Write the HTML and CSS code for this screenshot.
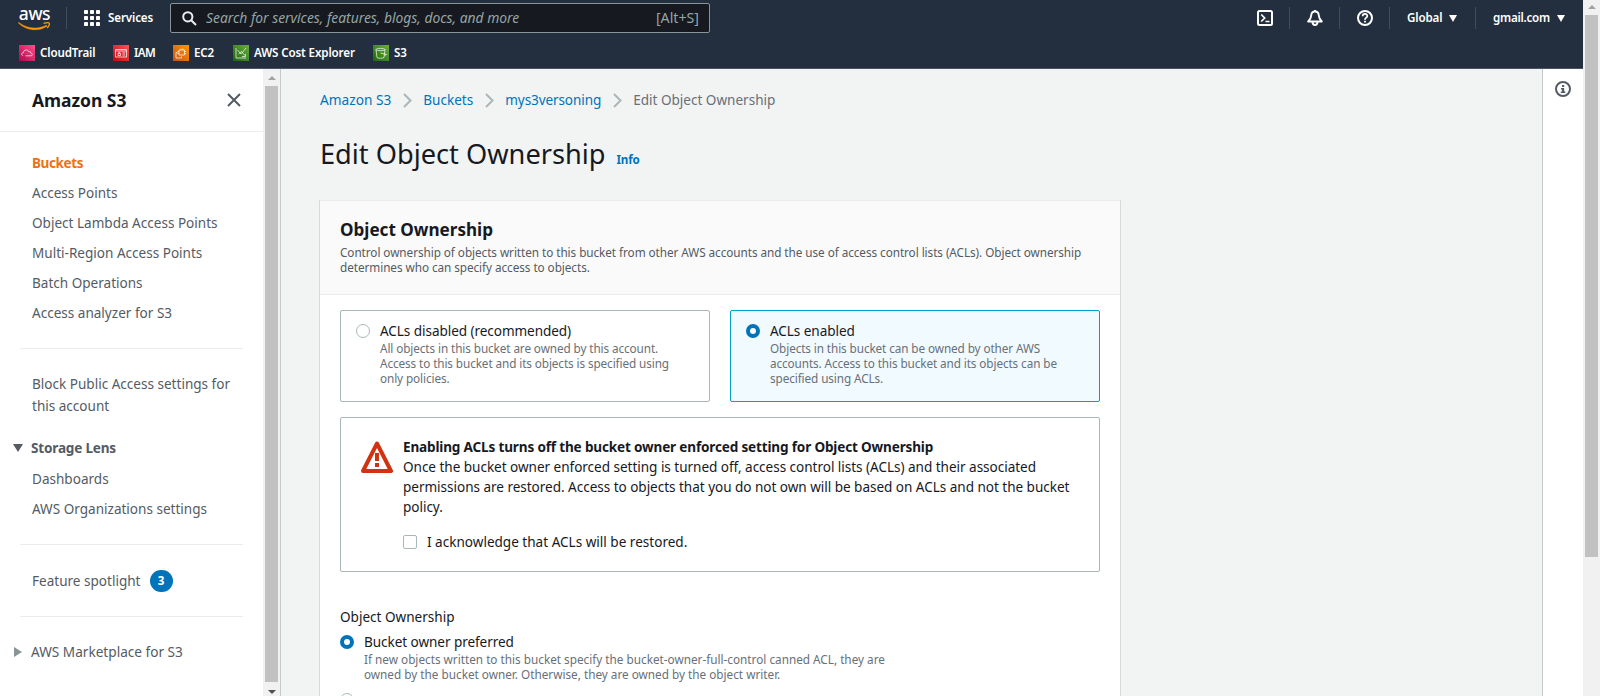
FILE: index.html
```html
<!DOCTYPE html>
<html lang="en">
<head>
<meta charset="utf-8">
<title>Edit Object Ownership</title>
<link rel="stylesheet" href="styles.css">
</head>
<body>
<div class="window">
  <div class="page">
    <header class="nav">
      <div class="nav-main">
        <div class="logo">
          <span class="logo-text">aws</span>
          <svg class="logo-smile" width="33" height="9" viewBox="0 0 33 9"><path d="M.3 1C8.500 8.800 20.500 9.800 29 4.200L28.500 3.200C20 7.600 9 7 .8.400Z" fill="#ff9900" stroke="#ff9900" stroke-width=".5"/><path d="M25.500 1.300C28.500.6 31 .6 31.300 1.200C31.600 2 30.600 4.500 29.200 6" fill="none" stroke="#ff9900" stroke-width="1.300"/></svg>
        </div>
        <i class="sep sep-logo"></i>
        <svg class="grid-icon" width="16" height="16" viewBox="0 0 16 16" fill="#fff"><rect width="4" height="4" rx=".8"/><rect x="6" width="4" height="4" rx=".8"/><rect x="12" width="4" height="4" rx=".8"/><rect y="6" width="4" height="4" rx=".8"/><rect x="6" y="6" width="4" height="4" rx=".8"/><rect x="12" y="6" width="4" height="4" rx=".8"/><rect y="12" width="4" height="4" rx=".8"/><rect x="6" y="12" width="4" height="4" rx=".8"/><rect x="12" y="12" width="4" height="4" rx=".8"/></svg>
        <span class="services">Services</span>
        <div class="search">
          <svg width="15" height="15" viewBox="0 0 15 15" fill="none" stroke="#eaeded" stroke-width="2"><circle cx="5.800" cy="5.800" r="4.600"/><path d="M9.200 9.200L14 14"/></svg>
          <span class="search-hint">Search for services, features, blogs, docs, and more</span>
          <span class="search-key">[Alt+S]</span>
        </div>
        <div class="nav-tools">
          <svg class="tool" width="16" height="16" viewBox="0 0 16 16" fill="none" stroke="#fff" stroke-width="2"><rect x="1" y="1" width="14" height="14" rx="1.500"/><path d="M4.200 4.500L7.700 8L4.200 11.500M8.500 11.500H12.500" stroke-width="1.700"/></svg>
          <i class="sep"></i>
          <svg class="tool" width="16" height="16" viewBox="0 0 16 16" fill="none" stroke="#fff" stroke-width="1.900" stroke-linejoin="round"><path d="M8 1.500C5.500 1.500 4.300 3.300 4.200 5.500C4.100 8 3.500 9 1.200 11.500H14.800C12.500 9 11.900 8 11.800 5.500C11.700 3.300 10.500 1.500 8 1.500Z"/><path d="M5.500 12C5.600 16 10.400 16 10.500 12M8 0V2"/></svg>
          <i class="sep"></i>
          <svg class="tool" width="16" height="16" viewBox="0 0 16 16" fill="none" stroke="#fff" stroke-width="2"><circle cx="8" cy="8" r="7"/><path d="M5.700 6.200C5.700 3.200 10.300 3.200 10.300 6C10.300 7.700 8 7.600 8 9.700M8 10.700V12.500" stroke-width="1.800"/></svg>
          <i class="sep"></i>
          <span class="menu menu-region">Global<svg width="8" height="7" viewBox="0 0 8 7" fill="#fff"><path d="M0 0H8L4 7Z"/></svg></span>
          <i class="sep"></i>
          <span class="menu menu-account">gmail.com<svg width="8" height="7" viewBox="0 0 8 7" fill="#fff"><path d="M0 0H8L4 7Z"/></svg></span>
        </div>
      </div>
      <nav class="favorites">
        <a class="fav fav-trail"><svg class="pink" viewBox="0 0 16 16"><path d="M4 10.500C2 10 2.500 7.500 4.500 7.600C4.500 4.500 9 4 9.800 6.800C11 6 12 7 11.600 8C14 8.500 13.500 10.800 12 10.800H6.500"/></svg>CloudTrail</a>
        <a class="fav fav-iam"><svg class="red" viewBox="0 0 16 16"><path d="M2.500 4.500H13.500V12H2.500ZM2.500 6H13.500M9.500 8H12M9.500 10H12M5 8.500H7.500V10.500H5ZM5.700 8.500V7.500H6.800V8.500"/></svg>IAM</a>
        <a class="fav fav-ec2"><svg class="orange" viewBox="0 0 16 16"><path d="M6 5H11.500V10H6ZM4.500 7.500H3V13H8.500V11.500M8 3.500V5M10 3.500V5M11.500 6.500H13M11.500 8.500H13M4.500 6.500H6M4.500 8.500H6"/></svg>EC2</a>
        <a class="fav fav-cost"><svg class="green" viewBox="0 0 16 16"><path d="M3 3V13H13M4.500 5L8 9L13 3M5.500 9L8.500 6.500L12 10.500M9 11.500H12.500V9"/></svg>AWS Cost Explorer</a>
        <a class="fav fav-s3"><svg class="green" viewBox="0 0 16 16"><path d="M3 4.500C3 3 12 3 12 4.500C12 6 3 6 3 4.500L4 12.500C5 13.500 10 13.500 11 12.500L12 4.500M7.500 8L13.500 9.500L11.700 10.500"/></svg>S3</a>
      </nav>
    </header>
    <div class="body">
      <aside class="side">
        <div class="side-head"><h2>Amazon S3</h2><svg width="14" height="14" viewBox="0 0 14 14" stroke="#545b64" stroke-width="2"><path d="M1 1L13 13M13 1L1 13"/></svg></div>
        <ul class="links links-main">
          <li class="current">Buckets</li><li>Access Points</li><li>Object Lambda Access Points</li><li>Multi-Region Access Points</li><li>Batch Operations</li><li>Access analyzer for S3</li>
        </ul>
        <hr>
        <p class="block-access">Block Public Access settings for<br>this account</p>
        <div class="group group-open"><svg width="10" height="8" viewBox="0 0 10 8" fill="#545b64"><path d="M0 0H10L5 8Z"/></svg>Storage Lens</div>
        <ul class="links links-lens"><li>Dashboards</li><li>AWS Organizations settings</li></ul>
        <hr>
        <div class="spotlight">Feature spotlight<span class="count">3</span></div>
        <hr>
        <div class="group group-closed"><svg width="8" height="10" viewBox="0 0 8 10" fill="#879596"><path d="M0 0V10L8 5Z"/></svg>AWS Marketplace for S3</div>
      </aside>
      <div class="bar side-bar"><i class="up"></i><i class="thumb"></i><i class="down"></i></div>
      <main class="content">
        <div class="crumbs">
          <a class="crumb-root">Amazon S3</a><svg viewBox="0 0 9 15"><path d="M1 1L7.500 7.500L1 14"/></svg><a>Buckets</a><svg viewBox="0 0 9 15"><path d="M1 1L7.500 7.500L1 14"/></svg><a class="crumb-name">mys3versoning</a><svg viewBox="0 0 9 15"><path d="M1 1L7.500 7.500L1 14"/></svg><span>Edit Object Ownership</span>
        </div>
        <div class="title"><h1>Edit Object Ownership</h1><a>Info</a></div>
        <section class="card">
          <div class="card-head">
            <h2>Object Ownership</h2>
            <p>Control ownership of objects written to this bucket from other AWS accounts and the use of access control lists (ACLs). Object ownership<br>determines who can specify access to objects.</p>
          </div>
          <div class="card-body">
            <div class="tiles">
              <div class="tile"><i class="radio"></i><div><div class="label">ACLs disabled (recommended)</div><p class="hint">All objects in this bucket are owned by this account.<br>Access to this bucket and its objects is specified using<br>only policies.</p></div></div>
              <div class="tile selected"><i class="radio on"></i><div><div class="label">ACLs enabled</div><p class="hint">Objects in this bucket can be owned by other AWS<br>accounts. Access to this bucket and its objects can be<br>specified using ACLs.</p></div></div>
            </div>
            <div class="warning">
              <svg width="32" height="32" viewBox="0 0 32 32"><path d="M16 2.500L30 30H2Z" fill="none" stroke="#d13212" stroke-width="4" stroke-linejoin="round"/><path d="M16 12V20M16 22V26" stroke="#d13212" stroke-width="4"/></svg>
              <div class="warning-text">
                <strong>Enabling ACLs turns off the bucket owner enforced setting for Object Ownership</strong>
                <p>Once the bucket owner enforced setting is turned off, access control lists (ACLs) and their associated<br>permissions are restored. Access to objects that you do not own will be based on ACLs and not the bucket<br>policy.</p>
                <div class="ack"><i class="check"></i>I acknowledge that ACLs will be restored.</div>
              </div>
            </div>
            <div class="field-label">Object Ownership</div>
            <div class="option"><i class="radio on"></i><div><div class="label">Bucket owner preferred</div><p class="hint">If new objects written to this bucket specify the bucket-owner-full-control canned ACL, they are<br>owned by the bucket owner. Otherwise, they are owned by the object writer.</p></div></div>
            <div class="option option-next"><i class="radio"></i></div>
          </div>
        </section>
      </main>
      <div class="info"><svg width="16" height="16" viewBox="0 0 16 16"><circle cx="8" cy="8" r="7" fill="none" stroke="#545b64" stroke-width="2"/><path d="M7 4H9.200V6H7ZM6 7H9.200V10.500H10.300V12H5.800V10.500H7V8.500H6Z" fill="#545b64"/></svg></div>
    </div>
  </div>
  <div class="bar page-bar"><i class="up"></i><i class="thumb"></i></div>
</div>
</body>
</html>
```
FILE: styles.css
```css
* { box-sizing: border-box; }
body {
  margin: 0;
  height: 696px;
  overflow: hidden;
  font: 13.55px/20px "Noto Sans", sans-serif;
  color: #16191f;
  white-space: nowrap;
}
h1, h2, p, ul { margin: 0; padding: 0; }
ul { list-style: none; }
svg, i { display: block; flex: none; }
hr { width: 223px; height: 1px; margin: 0 0 0 20px; border: 0; background: #eaeded; }
a { color: #0073bb; }

.window { display: flex; height: 696px; }
.page { flex: 1; display: flex; flex-direction: column; min-width: 0; }

/* Top navigation */
.nav {
  height: 69px;
  flex: none;
  background: #232f3e;
  border-bottom: 1px solid #4a545f;
  color: #fff;
  font-weight: 600;
  font-size: 11.6px;
  letter-spacing: -.13px;
}
.nav-main { display: flex; align-items: center; height: 36px; }
.logo { width: 33px; margin-left: 18px; display: flex; flex-direction: column; align-items: center; }
.logo-text { font: 500 17.5px/15px "Noto Sans", sans-serif; letter-spacing: -.4px; }
.logo-smile { margin-top: 1px; }
.sep { width: 1px; height: 22px; background: #414d5c; }
.sep-logo { margin-left: 15px; }
.grid-icon { margin-left: 17px; }
.services { width: 62px; margin-left: 8px; }
.search {
  display: flex;
  align-items: center;
  width: 540px;
  height: 30px;
  padding: 0 10px 0 11px;
  background: #16191f;
  border: 1px solid #879596;
  border-radius: 2px;
  color: #95a5a6;
  font-weight: 400;
  font-size: 13.85px;
  letter-spacing: 0;
}
.search-hint { margin-left: 9px; font-style: italic; }
.search-key { margin-left: auto; font-size: 14.2px; }
.nav-tools { display: flex; align-items: center; margin-left: auto; }
.tool { margin: 0 16px 0 17px; }
.menu { display: flex; align-items: center; gap: 7px; }
.menu-region { width: 85px; padding-left: 17px; }
.menu-account { width: 107px; padding-left: 17px; letter-spacing: -.25px; }
.favorites { display: flex; padding: 9px 0 0 19px; height: 32px; }
.fav { display: flex; align-items: center; height: 16px; gap: 5px; color: #fff; }
.fav svg { width: 16px; height: 16px; fill: none; stroke: #fff; stroke-width: .7; }
.fav-trail { width: 94px; }
.fav-iam { width: 60px; letter-spacing: -.6px; }
.fav-ec2 { width: 60px; }
.fav-cost { width: 140px; }
.pink { background: linear-gradient(45deg, #b0084d, #ff4f8b); }
.red { background: linear-gradient(45deg, #bd0816, #ff5252); }
.orange { background: linear-gradient(45deg, #c8511b, #f90); }
.green { background: linear-gradient(45deg, #1b660f, #6cae3e); }

.body { display: flex; flex: 1; min-height: 0; }

/* Side navigation */
.side { width: 263px; color: #545b64; background: #fff; }
.side-head {
  display: flex;
  align-items: center;
  justify-content: space-between;
  height: 63px;
  padding: 0 22px 0 32px;
  border-bottom: 1px solid #eaeded;
}
.side-head h2 { font-size: 17.5px; letter-spacing: -.05px; color: #16191f; }
.links { padding-left: 32px; line-height: 30px; }
.links-main { padding-top: 16px; height: 216px; }
.current { color: #ec7211; font-weight: 700; font-size: 13.55px; letter-spacing: -.4px; }
.block-access { padding: 24px 0 0 32px; line-height: 22px; height: 89px; }
.group { display: flex; align-items: center; height: 20px; }
.group-open { padding-left: 13px; gap: 8px; font-weight: 700; letter-spacing: -.18px; }
.links-lens { padding-top: 6px; height: 86px; }
.spotlight { display: flex; align-items: center; gap: 9px; height: 71px; padding-left: 32px; }
.count {
  width: 23px;
  height: 22px;
  border-radius: 11px;
  background: #0073bb;
  color: #fff;
  font: 700 11.600px/22px "Noto Sans", sans-serif;
  text-align: center;
}
.group-closed { margin-top: 25px; padding-left: 14px; gap: 9px; font-size: 13.62px; }

/* Scroll bars */
.bar { display: flex; flex-direction: column; align-items: center; width: 17px; background: #f1f1f1; }
.bar .thumb { width: 13px; background: #c1c1c1; }
.up { border: 4px solid transparent; border-top: 0; border-bottom-color: #a3a3a3; }
.down { border: 4px solid transparent; border-bottom: 0; border-top-color: #505050; }
.side-bar { padding-top: 7px; }
.side-bar .thumb { height: 596px; margin: 6px 0 8px; }
.page-bar { padding-top: 5px; }
.page-bar .thumb { height: 542px; margin-top: 6px; }

/* Main content */
.content { flex: 1; min-width: 0; padding: 21px 0 0 38px; background: #f2f3f3; border-left: 1px solid #c5cbcb; overflow: hidden; }
.crumbs { display: flex; align-items: center; height: 20px; margin-left: 1px; color: #687078; }
.crumbs svg { width: 9px; height: 15px; margin: 0 11.5px; fill: none; stroke: #aab7b8; stroke-width: 2; }
.crumb-root { font-size: 13.7px; }
.crumb-name { letter-spacing: -.1px; }
.title { display: flex; align-items: baseline; gap: 11px; margin: 26px 0 0 1px; height: 64px; }
.title h1 { font-weight: 400; font-size: 27.2px; line-height: 36px; }
.title a { font-weight: 700; font-size: 11.600px; letter-spacing: -.15px; }
.card { width: 802px; height: 600px; background: #fff; border: 1px solid #d5dbdb; border-top-color: #eaeded; }
.card-head { height: 94px; padding: 18px 0 0 20px; background: #fafafa; border-bottom: 1px solid #eaeded; }
.card-head h2 { font-size: 17.100px; line-height: 22px; }
.card-head p { margin-top: 4px; font-size: 11.750px; letter-spacing: -.06px; line-height: 15px; color: #545b64; }
.card-body { padding: 15px 20px 0; }
.tiles { display: flex; gap: 20px; }
.tile { display: flex; gap: 10px; width: 370px; height: 92px; padding: 11px 15px 0; border: 1px solid #aab7b8; border-radius: 2px; }
.tile.selected { background: #f1faff; border-color: #00a1c9; }
.radio { width: 14px; height: 14px; margin-top: 2px; border: 1px solid #aab7b8; border-radius: 50%; background: #fff; }
.radio.on { border: 4px solid #0073bb; }
.label { letter-spacing: -.06px; line-height: 19px; }
.hint { font-size: 11.75px; letter-spacing: -.1px; line-height: 15px; color: #687078; }
.warning { display: flex; gap: 10px; height: 155px; margin-top: 15px; padding: 19px 20px 0; border: 1px solid #aab7b8; border-radius: 2px; width: 760px; }
.warning svg { margin-top: 4px; }
.warning strong { display: block; letter-spacing: -.16px; }
.warning p { letter-spacing: -.03px; }
.ack { display: flex; align-items: center; gap: 10px; margin-top: 15px; }
.check { width: 14px; height: 14px; border: 1px solid #aab7b8; border-radius: 2px; }
.field-label { margin-top: 35px; }
.option { display: flex; gap: 10px; margin-top: 6px; }
.option .hint { letter-spacing: 0; }
.option-next { margin-top: 9px; }

/* Help panel */
.info { width: 41px; background: #fff; border-left: 1px solid #c5cbcb; padding: 12px 0 0 12px; }
```
